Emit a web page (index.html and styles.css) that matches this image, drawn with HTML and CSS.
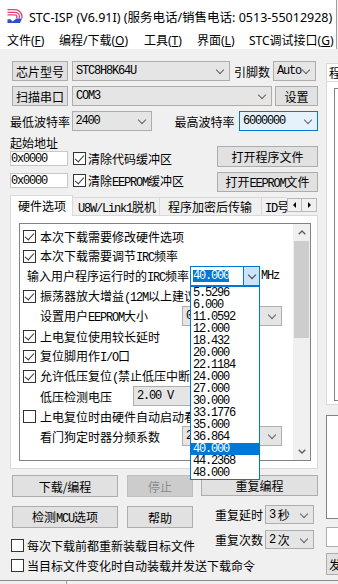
FILE: index.html
```html
<!DOCTYPE html>
<html lang="zh-CN">
<head>
    <meta charset="UTF-8">
    <meta name="viewport" content="width=device-width, initial-scale=1.0">
    <title>STC-ISP</title>
    <link rel="stylesheet" href="styles.css">
</head>
<body>
<div class="window">
    <div class="top">
        <div class="titlebar">
            <svg class="app-icon" width="16" height="16" viewBox="0 0 16 16">
                <g fill="none" stroke="#ef3b74" stroke-width="1.3">
                    <path d="M0.5 1.7H8a7 7 0 0 1 7 7v1.5"/>
                    <path d="M0.5 4.3H8a4.4 4.4 0 0 1 4.4 4.4v1.5"/>
                    <path d="M0.5 6.9H8a1.8 1.8 0 0 1 1.8 1.8v1.5"/>
                </g>
                <path d="M0.5 11.2h3l2 2.4 4-3.2h5.5l-2 4.6H0.5z" fill="#2a4fd0"/>
            </svg>
            <span class="title">STC-ISP (V6.91I) (服务电话/销售电话: 0513-55012928) 官方网站</span>
        </div>
        <ul class="menubar">
            <li class="mi-1">文件(<u>F</u>)</li>
            <li class="mi-2">编程/下载(<u>O</u>)</li>
            <li class="mi-3">工具(<u>T</u>)</li>
            <li class="mi-4">界面(<u>L</u>)</li>
            <li>STC调试接口(<u>G</u>)</li>
        </ul>
    </div>

    <div class="main">
        <div class="left">
            <div class="row">
                <button class="btn btn-side">芯片型号</button>
                <div class="combo mcu"><span class="m">STC8H8K64U</span></div>
                <span class="lbl pins-lbl">引脚数</span>
                <div class="combo pins"><span class="m">Auto</span></div>
            </div>
            <div class="row">
                <button class="btn btn-side">扫描串口</button>
                <div class="combo port"><span class="m">COM3</span></div>
                <button class="btn btn-set">设置</button>
            </div>
            <div class="row">
                <span class="lbl baud-lbl">最低波特率</span>
                <div class="combo baud-min"><span class="m">2400</span></div>
                <span class="lbl baud-lbl2">最高波特率</span>
                <div class="combo baud-max focus"><span class="m">6000000</span></div>
            </div>

            <div class="files">
                <div class="addr">
                    <div class="addr-title">起始地址</div>
                    <div class="addr-row">
                        <div class="edit"><span class="m">0x0000</span></div>
                        <span class="cb on"></span><span class="cb-txt">清除代码缓冲区</span>
                    </div>
                    <div class="addr-row">
                        <div class="edit"><span class="m">0x0000</span></div>
                        <span class="cb on"></span><span class="cb-txt">清除<span class="m">EEPROM</span>缓冲区</span>
                    </div>
                </div>
                <div class="file-btns">
                    <button class="btn">打开程序文件</button>
                    <button class="btn">打开<span class="m">EEPROM</span>文件</button>
                </div>
            </div>

            <div class="tabs">
                <div class="tab active">硬件选项</div>
                <div class="tab-rest">
                    <div class="tab t2"><span class="m">U8W/Link1</span>脱机</div>
                    <div class="tab t3">程序加密后传输</div>
                    <div class="tab t4"><span class="m">ID</span>号</div>
                </div>
                <div class="spin">
                    <span class="spin-btn spin-l"></span>
                    <span class="spin-btn spin-r"></span>
                </div>
            </div>

            <div class="panel">
                <div class="opts">
                    <div class="opt-list">
                        <div class="opt"><span class="cb on"></span><span class="txt">本次下载需要修改硬件选项</span></div>
                        <div class="opt"><span class="cb on"></span><span class="txt">本次下载需要调节<span class="m">IRC</span>频率</span></div>
                        <div class="opt irc">
                            <span class="irc-lbl">输入用户程序运行时的<span class="m">IRC</span>频率</span>
                            <div class="irc-combo">
                                <span class="sel m">40.000</span>
                                <span class="irc-drop"></span>
                                <ul class="drop-list">
                                    <li>5.5296</li>
                                    <li>6.000</li>
                                    <li>11.0592</li>
                                    <li>12.000</li>
                                    <li>18.432</li>
                                    <li>20.000</li>
                                    <li>22.1184</li>
                                    <li>24.000</li>
                                    <li>27.000</li>
                                    <li>30.000</li>
                                    <li>33.1776</li>
                                    <li>35.000</li>
                                    <li>36.864</li>
                                    <li class="on">40.000</li>
                                    <li>44.2368</li>
                                    <li>48.000</li>
                                </ul>
                            </div>
                            <span class="m unit">MHz</span>
                        </div>
                        <div class="opt"><span class="cb on"></span><span class="txt">振荡器放大增益<span class="m">(12M</span>以上建议</span></div>
                        <div class="opt ind">
                            <span class="ind-lbl wide">设置用户<span class="m">EEPROM</span>大小</span>
                            <div class="combo eep"><span class="m">0</span></div>
                        </div>
                        <div class="opt"><span class="cb on"></span><span class="txt">上电复位使用较长延时</span></div>
                        <div class="opt"><span class="cb on"></span><span class="txt">复位脚用作<span class="m">I/O</span>口</span></div>
                        <div class="opt"><span class="cb on"></span><span class="txt">允许低压复位<span class="m">(</span>禁止低压中断</span></div>
                        <div class="opt ind">
                            <span class="ind-lbl narrow">低压检测电压</span>
                            <div class="combo lv"><span class="m">2.00 V</span></div>
                        </div>
                        <div class="opt"><span class="cb"></span><span class="txt">上电复位时由硬件自动启动看</span></div>
                        <div class="opt ind">
                            <span class="ind-lbl wide">看门狗定时器分频系数</span>
                            <div class="combo eep"><span class="m">2</span></div>
                        </div>
                    </div>
                    <div class="vscroll">
                        <div class="sb-btn">
                            <svg width="8" height="5" viewBox="0 0 8 5"><path d="M0.7 4.3L4 1l3.3 3.3" fill="none" stroke="#606060" stroke-width="1.4"/></svg>
                        </div>
                        <div class="sb-track"><div class="sb-thumb"></div></div>
                        <div class="sb-btn">
                            <svg width="8" height="5" viewBox="0 0 8 5"><path d="M0.7 0.7L4 4l3.3-3.3" fill="none" stroke="#606060" stroke-width="1.4"/></svg>
                        </div>
                    </div>
                </div>
            </div>

            <div class="bottom">
                <div class="bottom-left">
                    <div class="btn-row">
                        <button class="btn b-main">下载/编程</button>
                        <button class="btn b-small" disabled>停止</button>
                    </div>
                    <div class="btn-row">
                        <button class="btn b-main">检测<span class="m">MCU</span>选项</button>
                        <button class="btn b-small">帮助</button>
                    </div>
                    <div class="chk-row"><span class="cb"></span><span class="cb-txt">每次下载前都重新装载目标文件</span></div>
                    <div class="chk-row"><span class="cb"></span><span class="cb-txt">当目标文件变化时自动装载并发送下载命令</span></div>
                </div>
                <div class="bottom-right">
                    <button class="btn b-repeat">重复编程</button>
                    <div class="rep-row">
                        <span>重复延时</span>
                        <div class="combo rep"><span class="m">3</span>&nbsp;秒</div>
                    </div>
                    <div class="rep-row">
                        <span>重复次数</span>
                        <div class="combo rep"><span class="m">2</span>&nbsp;次</div>
                    </div>
                </div>
            </div>
        </div>

        <div class="right">
            <div class="rtab">程序文件</div>
            <div class="rpanel"><div class="rinner"></div></div>
            <div class="rbox rbox-big"></div>
            <div class="rbox rbox-edit"></div>
            <button class="btn rsend">发送</button>
        </div>
    </div>

    <div class="status"><span class="status-sep"></span></div>
</div>
</body>
</html>
```

FILE: styles.css
```css
* {
    box-sizing: border-box;
}

body {
    margin: 0;
    background: #f0f0f0;
    font-family: "Noto Sans CJK SC", sans-serif;
    font-size: 12px;
    color: #000;
}

.window {
    width: 338px;
    height: 584px;
    overflow: hidden;
    background: #f0f0f0;
}

/* latin text in the SimSun look */
.m {
    font-family: "Liberation Mono", monospace;
    letter-spacing: -1.2px;
}

/* title + menu */
.top {
    width: 337px;
    background: #fff;
    border-right: 1px solid #a0a0a0;
}

.titlebar {
    height: 31px;
    display: flex;
    align-items: center;
    padding: 1px 0 0 7px;
    white-space: nowrap;
    overflow: hidden;
}

.app-icon {
    flex: none;
    margin-right: 6px;
}

.title {
    font-family: "Noto Sans", "Noto Sans CJK SC", sans-serif;
    font-size: 12.5px;
}

.menubar {
    list-style: none;
    margin: 0;
    padding: 0 0 0 7px;
    height: 18px;
    display: flex;
    font-family: "Noto Sans", "Noto Sans CJK SC", sans-serif;
    font-size: 12px;
    line-height: 20px;
    white-space: nowrap;
}

.menubar li {
    flex: none;
}

.menubar .mi-1 { width: 52px; }
.menubar .mi-2 { width: 85px; }
.menubar .mi-3 { width: 53px; }
.menubar .mi-4 { width: 52px; }

.menubar u {
    text-underline-offset: 1px;
}

/* main area */
.main {
    display: flex;
    height: 531px;
}

.left {
    width: 326px;
    flex: none;
    padding: 12px 8px 0 10px;
}

.row {
    display: flex;
    align-items: center;
    height: 20px;
    margin-bottom: 5px;
    white-space: nowrap;
}

.btn {
    font: inherit;
    color: #000;
    background: #e1e1e1;
    border: 1px solid #adadad;
    padding: 0;
    height: 20px;
    white-space: nowrap;
}

.btn:disabled {
    background: #cccccc;
    border-color: #bfbfbf;
    color: #8a8a8a;
}

.btn-side {
    width: 56px;
    margin-left: 2px;
}

.btn-set {
    width: 43px;
    margin-left: 3px;
}

.combo {
    position: relative;
    flex: none;
    height: 20px;
    display: flex;
    align-items: center;
    padding-left: 3px;
    background: #e5e5e5;
    border: 1px solid #adadad;
    white-space: nowrap;
    overflow: hidden;
}

.combo::after {
    content: "";
    position: absolute;
    right: 6px;
    top: 50%;
    margin-top: -4px;
    width: 5px;
    height: 5px;
    border: solid #606060;
    border-width: 0 1px 1px 0;
    transform: rotate(45deg);
}

.combo.focus {
    background: #e5f1fb;
    border-color: #0078d7;
}

.mcu { width: 158px; margin-left: 4px; }
.pins-lbl { width: 36px; margin-left: 4px; }
.pins { width: 43px; margin-left: 3px; }
.port { width: 200px; margin-left: 4px; }
.baud-lbl { width: 62px; }
.baud-min { width: 80px; }
.baud-lbl2 { width: 65px; margin-left: 23px; }
.baud-max { width: 79px; }

/* start address + file buttons */
.files {
    display: flex;
    justify-content: space-between;
    height: 56px;
    margin-top: 2px;
}

.addr-title {
    height: 13px;
    line-height: 13px;
}

.addr-row {
    display: flex;
    align-items: center;
    height: 15px;
    margin-top: 2px;
    white-space: nowrap;
}

.addr-row + .addr-row {
    margin-top: 7px;
}

.edit {
    width: 58px;
    height: 15px;
    display: flex;
    align-items: center;
    background: #fff;
    border: 1px solid #c8c8c8;
}

.addr-row .cb {
    margin-left: 5px;
}

.addr-row .cb-txt {
    margin-left: 2px;
}

.file-btns {
    width: 101px;
    display: flex;
    flex-direction: column;
    padding-top: 10px;
}

.file-btns .btn {
    height: 21px;
}

.file-btns .btn + .btn {
    height: 20px;
    margin-top: 5px;
}

/* checkbox */
.cb {
    position: relative;
    flex: none;
    width: 13px;
    height: 13px;
    border: 1px solid #333;
    background: #fff;
}

.cb.on::after {
    content: "";
    position: absolute;
    left: 3.3px;
    top: 0.4px;
    width: 4px;
    height: 8px;
    border: solid #333;
    border-width: 0 1.2px 1.2px 0;
    transform: rotate(42deg);
}

/* tabs */
.tabs {
    display: flex;
    align-items: flex-end;
    height: 20px;
    margin-top: 3px;
}

.tab {
    flex: none;
    height: 18px;
    line-height: 17px;
    border: 1px solid #d9d9d9;
    border-bottom: none;
    background: #f0f0f0;
    white-space: nowrap;
}

.tab.active {
    position: relative;
    z-index: 1;
    width: 63px;
    height: 21px;
    line-height: 20px;
    margin-bottom: -1px;
    padding-left: 7px;
    background: #fff;
}

.tab-rest {
    display: flex;
    flex: none;
    width: 214px;
    overflow: hidden;
}

.t2 { width: 87px; padding-left: 5px; border-left: none; }
.t3 { width: 102px; padding-left: 8px; border-left: none; }
.t4 { width: 40px; padding-left: 3px; border-left: none; }

.spin {
    display: flex;
    align-self: flex-start;
    margin-top: 3px;
}

.spin-btn {
    width: 15px;
    height: 14px;
    display: flex;
    align-items: center;
    justify-content: center;
    background: #f0f0f0;
    border: 1px solid #b9b9b9;
}

.spin-btn + .spin-btn {
    border-left: none;
}

.spin-l::after,
.spin-r::after {
    content: "";
    border-top: 3px solid transparent;
    border-bottom: 3px solid transparent;
}

.spin-l::after { border-right: 3px solid #000; }
.spin-r::after { border-left: 3px solid #000; }

/* hardware options panel */
.panel {
    height: 254px;
    background: #fff;
    border: 1px solid #d9d9d9;
    padding: 7px 6px 7px 8px;
}

.opts {
    height: 238px;
    display: flex;
    border: 1px solid #828282;
}

.opt-list {
    flex: 1;
    padding-top: 2px;
}

.opt {
    display: flex;
    align-items: center;
    height: 20px;
    padding-left: 3px;
    white-space: nowrap;
}

.opt .txt {
    margin-left: 4px;
}

.opt.ind { padding-left: 20px; }
.opt.irc { padding-left: 7px; }

.ind-lbl.wide { width: 142px; }
.ind-lbl.narrow { width: 93px; }

.eep { width: 100px; }
.lv { width: 110px; }

.irc-lbl {
    width: 163px;
}

.irc-combo {
    position: relative;
    display: flex;
    align-items: center;
    width: 70px;
    height: 20px;
    padding-left: 2px;
    background: #fff;
    border: 1px solid #0078d7;
}

.sel {
    height: 12px;
    line-height: 12px;
    background: #0078d7;
    color: #fff;
}

.irc-drop {
    position: relative;
    margin-left: auto;
    width: 16px;
    height: 18px;
    background: #cce4f7;
    border-left: 1px solid #0078d7;
}

.irc-drop::after {
    content: "";
    position: absolute;
    left: 50%;
    top: 50%;
    margin: -4px 0 0 -3px;
    width: 5px;
    height: 5px;
    border: solid #404040;
    border-width: 0 1px 1px 0;
    transform: rotate(45deg);
}

.unit {
    margin-left: 1px;
}

/* the open drop-down of the IRC combo */
.drop-list {
    position: absolute;
    top: 19px;
    left: -1px;
    z-index: 5;
    width: 70px;
    margin: 0;
    padding: 0;
    list-style: none;
    background: #fff;
    border: 1px solid #0078d7;
    font-family: "Liberation Mono", monospace;
    letter-spacing: -1.2px;
}

.drop-list li {
    height: 12px;
    line-height: 12px;
    padding-left: 2px;
}

.drop-list li.on {
    background: #0078d7;
    color: #fff;
}

.vscroll {
    width: 17px;
    flex: none;
    display: flex;
    flex-direction: column;
    background: #f0f0f0;
}

.sb-btn {
    height: 17px;
    display: flex;
    align-items: center;
    justify-content: center;
}

.sb-track {
    flex: 1;
}

.sb-thumb {
    height: 97px;
    margin: 0 1px;
    background: #cdcdcd;
}

/* bottom buttons */
.bottom {
    display: flex;
    margin-top: 6px;
}

.bottom-left {
    width: 183px;
    flex: none;
}

.btn-row {
    display: flex;
    height: 22px;
    margin-left: 2px;
}

.btn-row + .btn-row {
    margin-top: 9px;
}

.b-main {
    width: 106px;
    height: 22px;
}

.b-small {
    width: 66px;
    height: 22px;
    margin-left: 9px;
}

.chk-row {
    display: flex;
    align-items: center;
    height: 20px;
    padding-left: 1px;
    white-space: nowrap;
}

.btn-row + .chk-row {
    margin-top: 7px;
}

.chk-row .cb-txt {
    margin-left: 3px;
}

.bottom-right {
    width: 117px;
    flex: none;
    margin-left: 8px;
}

.b-repeat {
    display: block;
    width: 117px;
    height: 21px;
}

.rep-row {
    display: flex;
    justify-content: flex-end;
    align-items: center;
    height: 19px;
    margin-top: 9px;
    padding-right: 4px;
    white-space: nowrap;
}

.rep-row + .rep-row {
    margin-top: 6px;
}

.rep {
    width: 49px;
    height: 19px;
    margin-left: 2px;
}

/* right column, cut off by the window edge */
.right {
    width: 120px;
    flex: none;
    padding-top: 14px;
}

.rtab {
    width: 60px;
    height: 18px;
    line-height: 17px;
    padding-left: 2px;
    border: 1px solid #d9d9d9;
    border-bottom: none;
    background: #fff;
    white-space: nowrap;
}

.rpanel {
    height: 324px;
    padding: 6px 0 0 7px;
    background: #fff;
    border: 1px solid #d9d9d9;
}

.rinner {
    height: 313px;
    border: 1px solid #828282;
}

.rbox {
    background: #fff;
    border: 1px solid #828282;
}

.rbox-big {
    height: 104px;
    margin-top: 10px;
}

.rbox-edit {
    height: 20px;
    margin-top: 8px;
    border-color: #adadad;
}

.rsend {
    display: block;
    width: 80px;
    height: 22px;
    margin-top: 6px;
    padding-left: 2px;
    text-align: left;
}

.status {
    height: 4px;
    border-top: 1px solid #8a8a8a;
    padding-left: 66px;
}

.status-sep {
    display: block;
    width: 1px;
    height: 3px;
    background: #a0a0a0;
}
```
